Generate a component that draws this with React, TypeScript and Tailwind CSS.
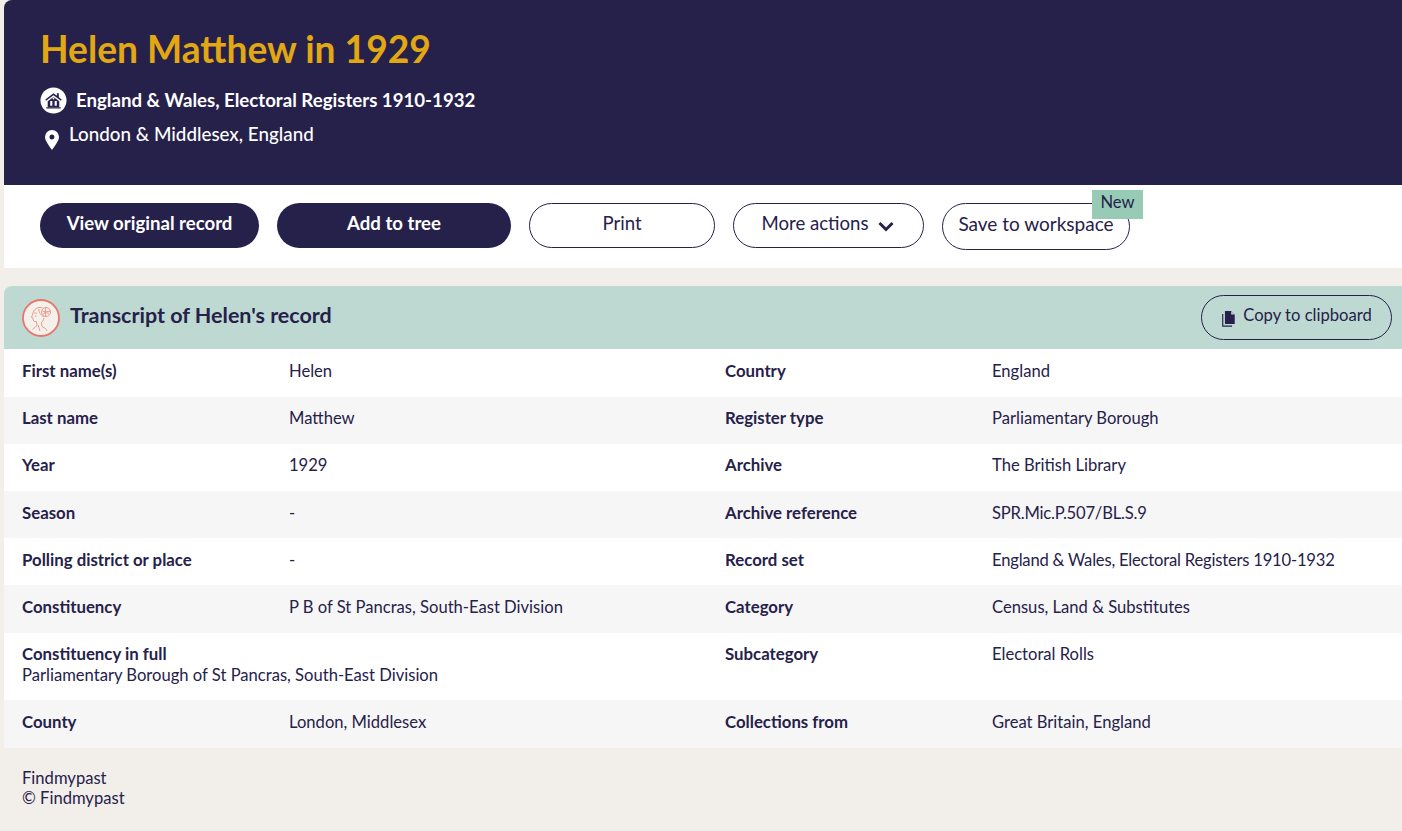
const rows = [
  { a: "First name(s)", b: "Helen", c: "Country", d: "England", h: "h-12 pb-1" },
  { a: "Last name", b: "Matthew", c: "Register type", d: "Parliamentary Borough", h: "h-[47px] pb-[6px]" },
  { a: "Year", b: "1929", c: "Archive", d: "The British Library", h: "h-[47px] pb-[6px]" },
  { a: "Season", b: "-", c: "Archive reference", d: "SPR.Mic.P.507/BL.S.9", h: "h-[47px] pb-1", vc: "tracking-[-0.2px]" },
  { a: "Polling district or place", b: "-", c: "Record set", d: "England & Wales, Electoral Registers 1910-1932", h: "h-[47px] pb-1", vc: "tracking-[-0.2px]" },
  { a: "Constituency", b: "P B of St Pancras, South-East Division", c: "Category", d: "Census, Land & Substitutes", h: "h-12 pb-1" },
]

function Cell({ label, value, vc }: { label: string; value: string; vc?: string }) {
  return (
    <div className="flex items-center pl-[18px]">
      <div className="flex items-baseline">
        <div className="w-[267px] shrink-0 font-bold text-[16.800px]">{label}</div>
        <div className={vc}>{value}</div>
      </div>
    </div>
  )
}

function HouseIcon() {
  return (
    <svg viewBox="0 0 28 28" className="w-[27px] h-[27px] shrink-0">
      <circle cx="14" cy="14" r="13.500" fill="#fff" />
      <path d="M5.500 13 14 6.500l3.500 2.700V6.500h2v4.200l3 2.300-.8 1.200L14 8.600 6.300 14.200z" fill="#26214a" />
      <path d="M8 14.800 14 10.300l6 4.500V21H8z" fill="#26214a" />
      <path d="M10.600 14.500h2.200v5h-2.200zM15.200 14.500h2.200v5h-2.200z" fill="#fff" />
      <circle cx="14" cy="12" r="1" fill="#fff" />
      <path d="M6.500 21h15v1.300h-15z" fill="#26214a" />
    </svg>
  )
}

function PinIcon() {
  return (
    <svg viewBox="0 0 14 20" className="w-[14px] h-[20px] shrink-0">
      <path fillRule="evenodd" d="M7 0a7 7 0 0 1 7 7c0 3.800-4.500 9.500-7 13C4.500 16.500 0 10.800 0 7a7 7 0 0 1 7-7zm0 4.500a2.500 2.500 0 1 0 0 5 2.500 2.500 0 0 0 0-5z" fill="#fff" />
    </svg>
  )
}

function PortraitIcon() {
  return (
    <svg viewBox="0 0 38 38" className="w-[38px] h-[38px] shrink-0" fill="none" stroke="#e8847c" strokeWidth="0.8">
      <circle cx="19" cy="19" r="18" fill="#f4f0ea" stroke="#e8766f" strokeWidth="1.800" />
      <path d="M17 8.500c-3.500.5-6 3.500-6.500 7l-1 3 1.500.5c0 2.500.5 4 3.500 3.500l.5 3.500-2 2.500-2.500 2" />
      <path d="M17 8.500c1.500-.3 2.500 0 3.500.5M22 19c-.5 2.500-1.500 3.500-2.500 4.500l.5 4 3.500 2 1.500 2.500" />
      <path d="M12 14.500c1-.8 2-.8 3 0M13 17h1.500M17 10c-.5 3 1.500 6 5 8" />
      <circle cx="24" cy="13" r="4.500" />
      <path d="M20.500 12c2 1 5 1 7.500 0M21 15c2-1.500 4.500-1.500 6-.5M24 8.500c-1 2-1 6 0 9M16 26l2 6" />
    </svg>
  )
}

export default function App() {
  return (
    <div className="min-h-[831px] bg-[#f2efea] pl-1 text-[#26214a] text-[16.600px] font-['Lato','Liberation_Sans',sans-serif]">
      <div className="h-[185px] bg-[#26214a] rounded-tl-lg pl-9 pt-[27px] text-white">
        <h1 className="text-[37.200px] leading-[44px] font-bold text-[#e2a814]">Helen Matthew in 1929</h1>
        <div className="flex items-center gap-[9px] mt-[16px]">
          <HouseIcon />
          <span className="text-[18.650px] font-bold">England &amp; Wales, Electoral Registers 1910-1932</span>
        </div>
        <div className="flex gap-[10px] ml-[5px] mt-[6px]">
          <div className="pt-[9px]"><PinIcon /></div>
          <span className="text-[18.800px] leading-[26px] font-medium">London &amp; Middlesex, England</span>
        </div>
      </div>

      <div className="h-[83px] bg-white pl-9 pt-[18px] flex items-start text-[18.600px]">
        <button className="w-[219px] h-[45px] pb-[3px] rounded-full bg-[#26214a] text-white font-bold">View original record</button>
        <button className="w-[234px] h-[45px] pb-[3px] ml-[18px] rounded-full bg-[#26214a] text-white font-bold">Add to tree</button>
        <button className="w-[186px] h-[45px] pb-[3px] ml-[18px] rounded-full border border-[#26214a]">Print</button>
        <button className="w-[191px] h-[45px] pb-[3px] ml-[18px] rounded-full border border-[#26214a] flex items-center justify-center gap-[9px]">
          <span className="-ml-[2px]">More actions</span>
          <svg viewBox="0 0 16 10" className="w-[16px] h-[11px] mt-[4px]" fill="none" stroke="#26214a" strokeWidth="3"><path d="M1.500 1.500 8 8l6.500-6.500" /></svg>
        </button>
        <div className="relative ml-[18px]">
          <button className="w-[188px] h-[47px] pb-[5px] rounded-full border border-[#26214a] text-[19px]">Save to workspace</button>
          <span className="absolute left-[150px] -top-[13px] w-[51px] h-[29px] pb-[4px] bg-[#97cbb6] text-[16.600px] flex items-center justify-center">New</span>
        </div>
      </div>

      <div className="h-[63px] mt-[18px] bg-[#bed9d2] rounded-tl-lg flex items-center pl-[18px] pr-[10px]">
        <PortraitIcon />
        <h2 className="ml-[10px] text-[21.500px] font-bold -mt-[5px]">Transcript of Helen's record</h2>
        <button className="ml-auto w-[191px] h-[45px] pb-[4px] rounded-full border border-[#26214a] flex items-center justify-center gap-[7px]">
          <svg viewBox="0 0 16 18" className="w-[15px] h-[16px] mt-[6px]">
            <path d="M4 0h7l4 4v10.500H4z" fill="#26214a" />
            <path d="M11 0v4h4z" fill="#bed9d2" />
            <path d="M1.500 3.500V17H12" fill="none" stroke="#26214a" strokeWidth="1.300" />
          </svg>
          <span>Copy to clipboard</span>
        </button>
      </div>

      {rows.map((r, i) => (
        <div key={r.a} className={`grid grid-cols-[703px_1fr] ${r.h} ${i % 2 ? "bg-[#f6f6f6]" : "bg-white"}`}>
          <Cell label={r.a} value={r.b} />
          <Cell label={r.c} value={r.d} vc={r.vc} />
        </div>
      ))}
      <div className="grid grid-cols-[703px_1fr] h-[67px] bg-white pt-[10px]">
        <div className="pl-[18px]">
          <div className="font-bold text-[16.800px] leading-[21px]">Constituency in full</div>
          <div className="leading-[21px] pt-[1px]">Parliamentary Borough of St Pancras, South-East Division</div>
        </div>
        <div className="flex items-baseline pl-[18px] leading-[21px]">
          <div className="w-[267px] font-bold text-[16.800px]">Subcategory</div>
          <div>Electoral Rolls</div>
        </div>
      </div>
      <div className="grid grid-cols-[703px_1fr] h-12 pb-1 bg-[#f6f6f6]">
        <Cell label="County" value="London, Middlesex" />
        <Cell label="Collections from" value="Great Britain, England" />
      </div>

      <div className="pl-[18px] pt-[20px] leading-[20px]">
        <div>Findmypast</div>
        <div>© Findmypast</div>
      </div>
    </div>
  )
}
